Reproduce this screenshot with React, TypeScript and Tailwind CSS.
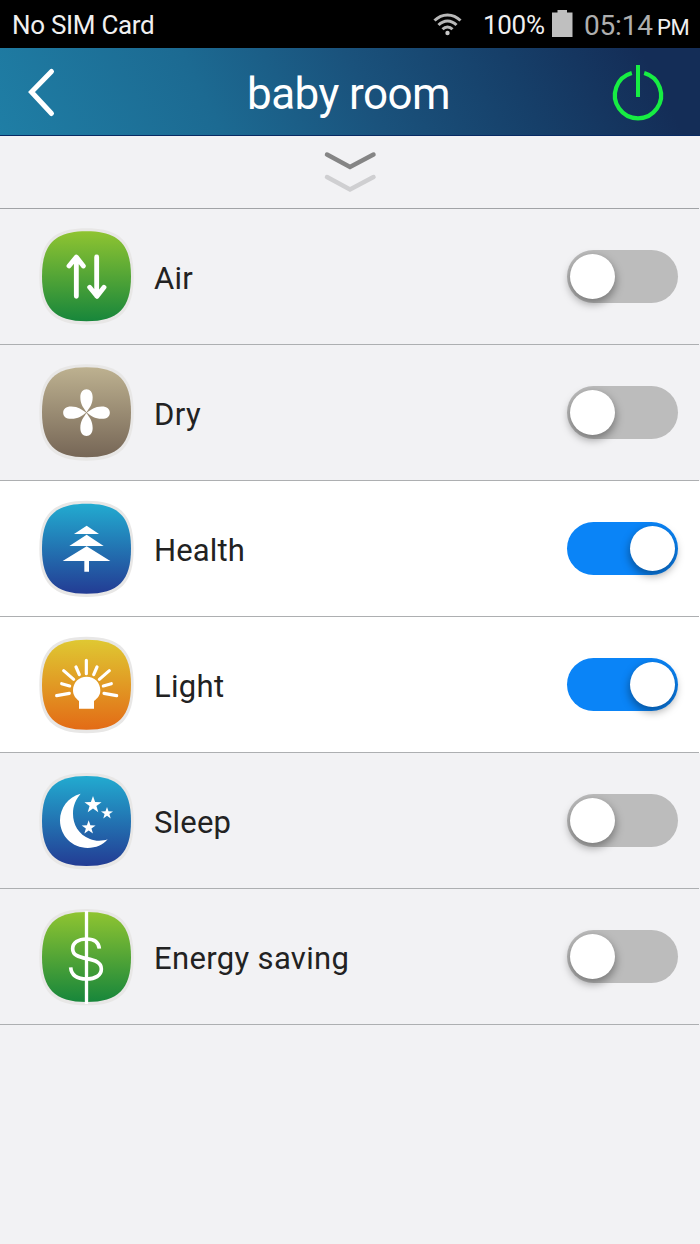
import type { ReactNode } from "react";

const SQUIRCLE =
  "M169.5 34 C265 34 303 73 303 169 C303 265 265 304 169.5 304 C74 304 36 265 36 169 C36 73 74 34 169.5 34 Z";
const FRAME =
  "M169.5 25 C271 25 311 67 311 169.5 C311 272 271 314 169.5 314 C68 314 28 272 28 169.5 C28 67 68 25 169.5 25 Z";

function Tile({ id, from, to, dy = 0, children }: { id: string; from: string; to: string; dy?: number; children: ReactNode }) {
  return (
    <svg width="98" height="100" viewBox="24 18 294 300" className="shrink-0">
      <defs>
        <linearGradient id={id} x1="0" y1="0" x2="0" y2="1">
          <stop offset="0" stopColor={from} />
          <stop offset="1" stopColor={to} />
        </linearGradient>
      </defs>
      <g transform={`translate(0 ${dy})`}>
        <path d={FRAME} fill="#e8e7e6" />
        <path d={SQUIRCLE} fill={`url(#${id})`} />
      </g>
      {children}
    </svg>
  );
}

const line = { fill: "none", stroke: "#fff", strokeLinecap: "round", strokeLinejoin: "round" } as const;

const star = (cx: number, cy: number, r: number) =>
  Array.from({ length: 10 }, (_, i) => {
    const a = (Math.PI * i) / 5 - Math.PI / 2;
    const d = i % 2 ? r * 0.4 : r;
    return `${cx + d * Math.cos(a)},${cy + d * Math.sin(a)}`;
  }).join(" ");

const PETAL = "M169.5 169 C161 156 151 146 151 124 C151 108 159 100 169.5 100 C180 100 188 108 188 124 C188 146 178 156 169.5 169 Z";

const rows = [
  {
    label: "Air", on: false, spacing: "tracking-[0.2px]",
    icon: (
      <Tile id="air" from="#8fc431" to="#17863b">
        <path d="M139 112 V229 M117 138 L139 111 L160 138 M200 111 V228 M179 202 L201 229 L222 202" {...line} strokeWidth="14.5" />
      </Tile>
    ),
  },
  {
    label: "Dry", on: false, spacing: "tracking-[0.4px]",
    icon: (
      <Tile id="dry" from="#bdb190" to="#766656">
        {[0, 90, 180, 270].map((r) => (
          <path key={r} d={PETAL} fill="#fff" transform={`rotate(${r} 169.5 170)`} />
        ))}
      </Tile>
    ),
  },
  {
    label: "Health", on: true, spacing: "tracking-[0.15px]",
    icon: (
      <Tile id="health" from="#22abd0" to="#233c94" dy={1}>
        <path d="M170 101 L207 126 H132 Z M170 128 L221 162 H118 Z M170 163 L241 207 H177 V239 H163 V207 H98 Z" fill="#fff" />
      </Tile>
    ),
  },
  {
    label: "Light", on: true, spacing: "tracking-[0.3px]",
    icon: (
      <Tile id="light" from="#dfc832" to="#e36b16" dy={1.5}>
        <path d="M169 97 V137 M138 117 L148 140 M201 117 L191 140 M101 128 L131 154 M238 128 L208 154 M95 167 L119 174 M244 167 L220 174 M80 203 L118 196 M260 203 L222 196" {...line} strokeWidth="9.5" />
        <path d="M147 242 V219 C137 211 129 202 129 187 C129 163 147 146 170 146 C193 146 211 163 211 187 C211 202 203 211 192 219 V242 Z" fill="#fff" />
      </Tile>
    ),
  },
  {
    label: "Sleep", on: false, spacing: "tracking-[0.2px]",
    icon: (
      <Tile id="sleep" from="#22abd0" to="#233c94" dy={2}>
        <path d="M152 89 C115 99 90 131 90 169 C90 216 127 252 173 252 C198 252 219 243 233 226 C217 232 195 232 180 225 C145 211 129 181 129 149 C129 125 137 106 152 89 Z" fill="#fff" />
        <polygon points={star(189, 123, 27)} fill="#fff" />
        <polygon points={star(231, 148, 19)} fill="#fff" />
        <polygon points={star(176, 191, 22)} fill="#fff" />
      </Tile>
    ),
  },
  {
    label: "Energy saving", on: false, spacing: "tracking-[0.34px]",
    icon: (
      <Tile id="energy" from="#8fc431" to="#17863b" dy={2}>
        <path d="M169.5 33 V312" stroke="#fff" strokeWidth="10" />
        <path d="M208 146 C206 126 193 117 170 117 C145 117 128 128 128 146 C128 165 145 171 170 176 C197 181 214 188 214 207 C214 226 196 237 170 237 C141 237 124 225 122 202" {...line} strokeLinecap="butt" strokeWidth="11" />
      </Tile>
    ),
  },
];

function Toggle({ on }: { on: boolean }) {
  return (
    <div className={`flex h-[53px] w-[111px] items-center rounded-full ${on ? "justify-end bg-[#0a84f7] pr-[3px]" : "justify-start bg-[#bcbcbc] pl-[3px]"}`}>
      <div className="size-[45px] rounded-full bg-white shadow-[0_4px_8px_1px_rgba(0,0,0,0.35)]" />
    </div>
  );
}

export default function App() {
  return (
    <div className="flex h-[1244px] w-[700px] flex-col overflow-hidden bg-[#f2f2f4] font-['Roboto',sans-serif]">
      <div className="flex h-12 shrink-0 items-center bg-black pl-3 text-[26px] leading-[48px] text-[#f0f0f0]">
        <span className="grow pt-[2px] tracking-[-0.3px]">No SIM Card</span>
        <svg width="30" height="24" viewBox="0 0 30 24" className="mr-[20px]">
          <g fill="none" stroke="#b8b8b8" strokeWidth="3">
            <path d="M1.5 8.5 C9 1 20 1 27.5 8.5" />
            <path d="M5.5 13 C11 7.5 18 7.5 23.5 13" />
            <path d="M9.5 17.2 C12.5 14.2 16.5 14.2 19.5 17.2" />
          </g>
          <circle cx="14.5" cy="21" r="2.2" fill="#c8c8c8" />
        </svg>
        <span className="w-[69px] pt-[2px] tracking-[-0.3px]">100%</span>
        <svg width="21" height="28" viewBox="0 0 21 28" className="mb-[2px]">
          <path d="M0 3.5 H5.5 V1 H15 V3.5 H20.5 V28 H0 Z" fill="#bfbfbf" />
        </svg>
        <span className="ml-[11px] w-[73px] pt-[3px] text-[28px] tracking-[-0.2px] text-[#aeaeae]">05:14</span>
        <span className="w-[43px] pt-[7px] text-[22px] tracking-[-0.4px]">PM</span>
      </div>

      <header className="flex h-[88px] shrink-0 items-center border-b border-[#082a63] bg-[linear-gradient(63deg,#1f7ea5_0%,#1c6a92_30%,#1a527c_52%,#163f69_73%,#142d57_92%)]">
        <svg width="80" height="87" viewBox="0 0 80 87">
          <path d="M51.500 23.500 L31.500 44 L51.500 65.500" fill="none" stroke="#fff" strokeWidth="5" strokeLinecap="round" strokeLinejoin="miter" />
        </svg>
        <h1 className="ml-[167px] w-[353px] pt-1 text-[44px] leading-[52px] tracking-[-0.55px] text-white">baby room</h1>
        <svg width="76" height="87" viewBox="0 0 76 87" className="shrink-0">
          <path d="M31.8 25 A23.1 23.1 0 1 0 44.2 25" fill="none" stroke="#17ed43" strokeWidth="4.2" />
          <path d="M38 17 V49" stroke="#17ed43" strokeWidth="4" />
        </svg>
      </header>

      <div className="mr-px flex h-[73px] shrink-0 justify-center border-b border-[#a1a3a6] pl-px">
        <svg width="60" height="72" viewBox="0 0 60 72" fill="none" strokeWidth="4.5" strokeLinecap="round">
          <path d="M7 41 L30 53.5 L53.500 41" stroke="#cfcfd1" />
          <path d="M7 18.500 L30 31 L53.500 18.500" stroke="#858585" />
        </svg>
      </div>

      <main>
        {rows.map((row) => (
          <div key={row.label} className={row.on ? "bg-white" : ""}>
            <div className="mr-px flex h-[136px] border-b border-[#adafb1] pr-[21px] pl-[38px]">
              <div className="pt-[17px]">{row.icon}</div>
              <span className={`ml-[18px] grow pt-[50px] text-[31px] leading-10 text-[#222] ${row.spacing}`}>{row.label}</span>
              <div className="pt-[41px]">
                <Toggle on={row.on} />
              </div>
            </div>
          </div>
        ))}
      </main>
    </div>
  );
}
